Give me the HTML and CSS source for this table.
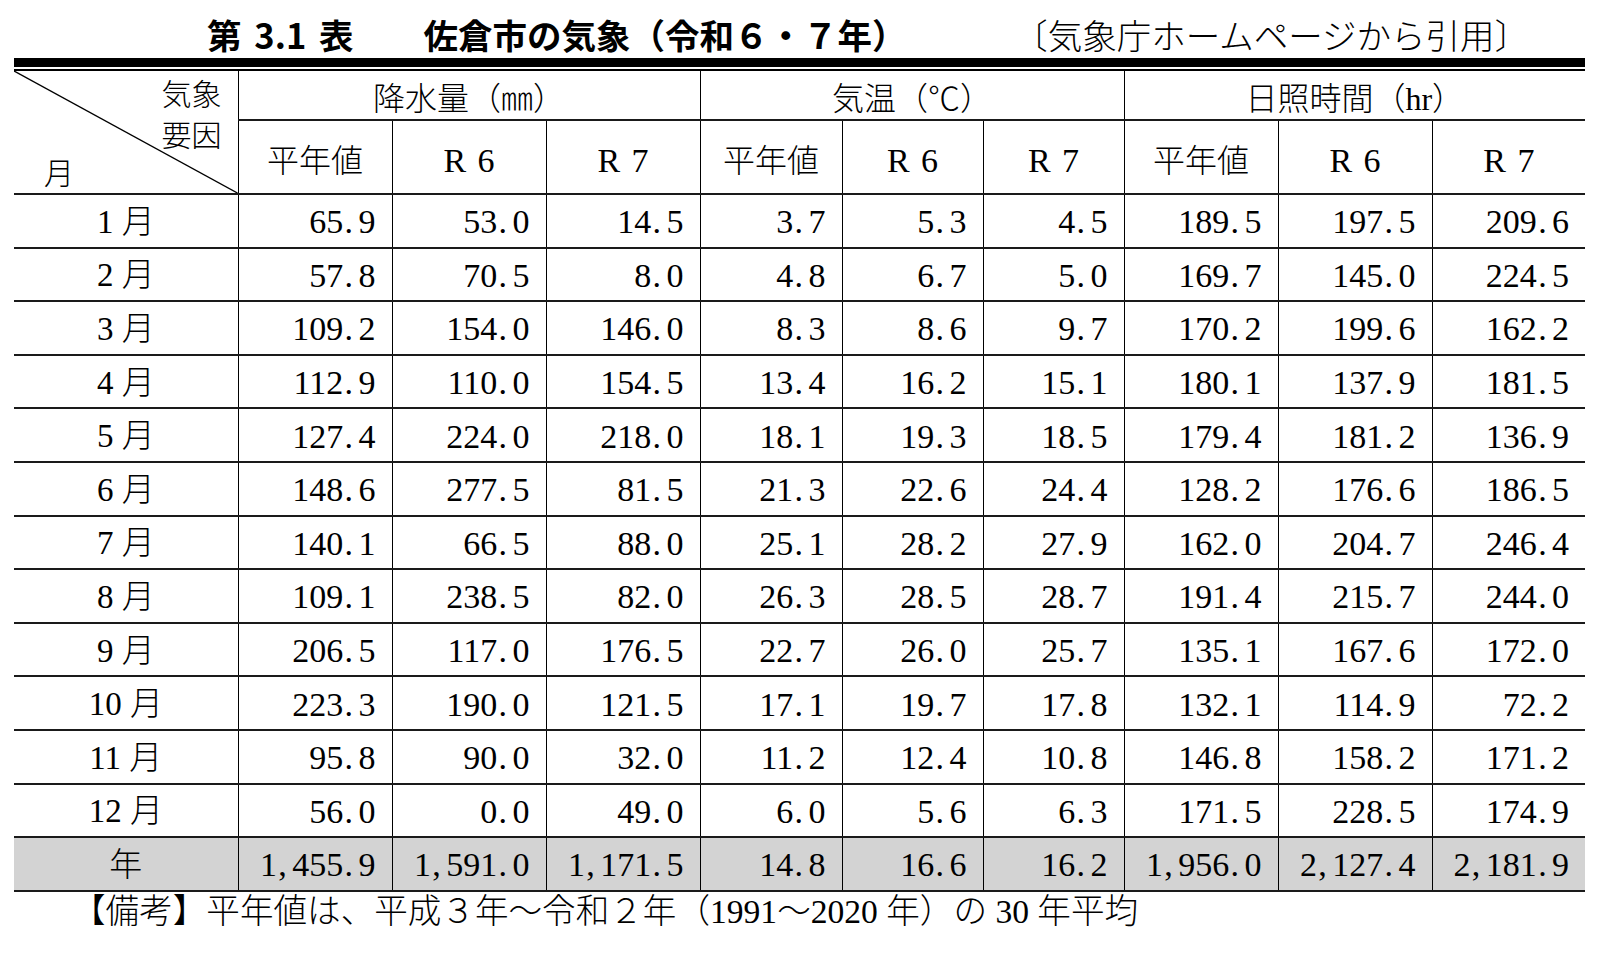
FILE: index.html
```html
<!DOCTYPE html>
<html lang="ja">
<head>
<meta charset="utf-8">
<title>第3.1表 佐倉市の気象</title>
<link rel="stylesheet" href="styles.css">
</head>
<body>
<div class="page">
  <header class="head">
    <h1 class="title"><span class="t-no">第 3.1 表</span><span class="t-name">佐倉市の気象（令和６・７年）</span></h1>
    <p class="source">〔気象庁ホームページから引用〕</p>
  </header>
  <div class="rule"></div>
  <table class="wx">
    <colgroup>
      <col class="c-m"><col class="c-a"><col class="c-a"><col class="c-a">
      <col class="c-b"><col class="c-b2"><col class="c-b2">
      <col class="c-a"><col class="c-a"><col class="c-c">
    </colgroup>
    <thead>
      <tr class="hr1">
        <th rowspan="2" class="corner-cell">
          <svg class="diag" viewBox="0 0 100 100" preserveAspectRatio="none"><line x1="0" y1="0" x2="100" y2="100" stroke="#000" stroke-width="1.4" vector-effect="non-scaling-stroke"/></svg>
          <div class="corner"><div class="corner-top">気象<br>要因</div><div class="corner-bottom">月</div></div>
        </th>
        <th colspan="3">降水量（㎜）</th>
        <th colspan="3">気温（℃）</th>
        <th colspan="3">日照時間（hr）</th>
      </tr>
      <tr class="hr2">
        <th>平年値</th><th class="r">R 6</th><th class="r">R 7</th>
        <th>平年値</th><th class="r">R 6</th><th class="r">R 7</th>
        <th>平年値</th><th class="r">R 6</th><th class="r">R 7</th>
      </tr>
    </thead>
    <tbody>
      <tr><td class="m">1 月</td><td>65<span class="p">.</span>9</td><td>53<span class="p">.</span>0</td><td>14<span class="p">.</span>5</td><td>3<span class="p">.</span>7</td><td>5<span class="p">.</span>3</td><td>4<span class="p">.</span>5</td><td>189<span class="p">.</span>5</td><td>197<span class="p">.</span>5</td><td>209<span class="p">.</span>6</td></tr>
      <tr><td class="m">2 月</td><td>57<span class="p">.</span>8</td><td>70<span class="p">.</span>5</td><td>8<span class="p">.</span>0</td><td>4<span class="p">.</span>8</td><td>6<span class="p">.</span>7</td><td>5<span class="p">.</span>0</td><td>169<span class="p">.</span>7</td><td>145<span class="p">.</span>0</td><td>224<span class="p">.</span>5</td></tr>
      <tr><td class="m">3 月</td><td>109<span class="p">.</span>2</td><td>154<span class="p">.</span>0</td><td>146<span class="p">.</span>0</td><td>8<span class="p">.</span>3</td><td>8<span class="p">.</span>6</td><td>9<span class="p">.</span>7</td><td>170<span class="p">.</span>2</td><td>199<span class="p">.</span>6</td><td>162<span class="p">.</span>2</td></tr>
      <tr><td class="m">4 月</td><td>112<span class="p">.</span>9</td><td>110<span class="p">.</span>0</td><td>154<span class="p">.</span>5</td><td>13<span class="p">.</span>4</td><td>16<span class="p">.</span>2</td><td>15<span class="p">.</span>1</td><td>180<span class="p">.</span>1</td><td>137<span class="p">.</span>9</td><td>181<span class="p">.</span>5</td></tr>
      <tr><td class="m">5 月</td><td>127<span class="p">.</span>4</td><td>224<span class="p">.</span>0</td><td>218<span class="p">.</span>0</td><td>18<span class="p">.</span>1</td><td>19<span class="p">.</span>3</td><td>18<span class="p">.</span>5</td><td>179<span class="p">.</span>4</td><td>181<span class="p">.</span>2</td><td>136<span class="p">.</span>9</td></tr>
      <tr><td class="m">6 月</td><td>148<span class="p">.</span>6</td><td>277<span class="p">.</span>5</td><td>81<span class="p">.</span>5</td><td>21<span class="p">.</span>3</td><td>22<span class="p">.</span>6</td><td>24<span class="p">.</span>4</td><td>128<span class="p">.</span>2</td><td>176<span class="p">.</span>6</td><td>186<span class="p">.</span>5</td></tr>
      <tr><td class="m">7 月</td><td>140<span class="p">.</span>1</td><td>66<span class="p">.</span>5</td><td>88<span class="p">.</span>0</td><td>25<span class="p">.</span>1</td><td>28<span class="p">.</span>2</td><td>27<span class="p">.</span>9</td><td>162<span class="p">.</span>0</td><td>204<span class="p">.</span>7</td><td>246<span class="p">.</span>4</td></tr>
      <tr><td class="m">8 月</td><td>109<span class="p">.</span>1</td><td>238<span class="p">.</span>5</td><td>82<span class="p">.</span>0</td><td>26<span class="p">.</span>3</td><td>28<span class="p">.</span>5</td><td>28<span class="p">.</span>7</td><td>191<span class="p">.</span>4</td><td>215<span class="p">.</span>7</td><td>244<span class="p">.</span>0</td></tr>
      <tr><td class="m">9 月</td><td>206<span class="p">.</span>5</td><td>117<span class="p">.</span>0</td><td>176<span class="p">.</span>5</td><td>22<span class="p">.</span>7</td><td>26<span class="p">.</span>0</td><td>25<span class="p">.</span>7</td><td>135<span class="p">.</span>1</td><td>167<span class="p">.</span>6</td><td>172<span class="p">.</span>0</td></tr>
      <tr><td class="m">10 月</td><td>223<span class="p">.</span>3</td><td>190<span class="p">.</span>0</td><td>121<span class="p">.</span>5</td><td>17<span class="p">.</span>1</td><td>19<span class="p">.</span>7</td><td>17<span class="p">.</span>8</td><td>132<span class="p">.</span>1</td><td>114<span class="p">.</span>9</td><td>72<span class="p">.</span>2</td></tr>
      <tr><td class="m">11 月</td><td>95<span class="p">.</span>8</td><td>90<span class="p">.</span>0</td><td>32<span class="p">.</span>0</td><td>11<span class="p">.</span>2</td><td>12<span class="p">.</span>4</td><td>10<span class="p">.</span>8</td><td>146<span class="p">.</span>8</td><td>158<span class="p">.</span>2</td><td>171<span class="p">.</span>2</td></tr>
      <tr><td class="m">12 月</td><td>56<span class="p">.</span>0</td><td>0<span class="p">.</span>0</td><td>49<span class="p">.</span>0</td><td>6<span class="p">.</span>0</td><td>5<span class="p">.</span>6</td><td>6<span class="p">.</span>3</td><td>171<span class="p">.</span>5</td><td>228<span class="p">.</span>5</td><td>174<span class="p">.</span>9</td></tr>
      <tr class="total"><td class="m">年</td><td>1<span class="p">,</span>455<span class="p">.</span>9</td><td>1<span class="p">,</span>591<span class="p">.</span>0</td><td>1<span class="p">,</span>171<span class="p">.</span>5</td><td>14<span class="p">.</span>8</td><td>16<span class="p">.</span>6</td><td>16<span class="p">.</span>2</td><td>1<span class="p">,</span>956<span class="p">.</span>0</td><td>2<span class="p">,</span>127<span class="p">.</span>4</td><td>2<span class="p">,</span>181<span class="p">.</span>9</td></tr>
    </tbody>
  </table>
  <p class="note">【備考】平年値は、平成３年～令和２年（1991～2020 年）の 30 年平均</p>
</div>
</body>
</html>
```

FILE: styles.css
```css
* { box-sizing: border-box; }
html, body { margin: 0; padding: 0; background: #fff; }
body {
  font-family: "Liberation Serif", "Noto Sans CJK JP", serif;
  color: #000;
}
.page { width: 1599px; padding-left: 14px; }

.head {
  display: flex;
  align-items: center;
  width: 1571px;
  height: 58px;
  padding-top: 10px;
}
.title {
  margin: 0;
  padding-left: 193px;
  display: flex;
  gap: 70px;
  font-family: "Noto Sans CJK JP", sans-serif;
  font-weight: 700;
  font-size: 34.5px;
  line-height: 1;
  white-space: nowrap;
}
.t-no { word-spacing: 5px; }
.source {
  margin: 0 0 0 auto;
  padding-right: 56px;
  font-family: "Noto Sans CJK JP", sans-serif;
  font-weight: 300;
  font-size: 34.5px;
  line-height: 1;
  white-space: nowrap;
}

.rule {
  width: 1571px;
  height: 13px;
  border-top: 9px solid #000;
  border-bottom: 2px solid #000;
}

.wx {
  width: 1571px;
  border-collapse: collapse;
  table-layout: fixed;
}
.c-m { width: 224px; }
.c-a { width: 154px; }
.c-b { width: 142px; }
.c-b2 { width: 141px; }
.c-c { width: 153px; }

.wx th, .wx td {
  padding: 0;
  border-left: 1px solid #000;
  border-bottom: 2px solid #1a1a1a;
  vertical-align: middle;
  line-height: 1;
  white-space: nowrap;
}
.wx th:first-child, .wx td:first-child { border-left: none; }
.wx .hr2 th:first-child { border-left: 1px solid #000; }

.wx th {
  font-weight: 300;
  font-size: 32px;
  text-align: center;
  padding-top: 7px;
}
.wx th.r { font-size: 34px; word-spacing: 3px; }
.hr1 { height: 49px; }
.hr2 { height: 74px; }

.wx th.corner-cell { position: relative; vertical-align: top; text-align: left; padding-top: 0; }
.diag {
  position: absolute;
  left: 0; top: 0;
  width: 100%; height: 100%;
}
.corner {
  height: 122px;
  display: flex;
  flex-direction: column;
  justify-content: space-between;
  padding: 3px 16px 2px 30px;
  font-size: 30px;
  line-height: 41px;
}
.corner-top { align-self: flex-end; }
.corner-bottom { align-self: flex-start; line-height: 36px; }

.wx tbody tr { height: 53.6px; }
.wx td {
  font-size: 34px;
  text-align: right;
  padding-right: 16px;
  padding-top: 3px;
}
.wx td.m {
  font-size: 33px;
  font-weight: 300;
  text-align: center;
  padding-right: 0;
}
.p {
  display: inline-block;
  width: .45em;
  padding-left: .04em;
  text-align: left;
}
.total td { background: #d3d3d3; }

.note {
  margin: 2px 0 0;
  padding-left: 58px;
  font-size: 33.6px;
  font-weight: 300;
  line-height: 36px;
  white-space: nowrap;
}
```
